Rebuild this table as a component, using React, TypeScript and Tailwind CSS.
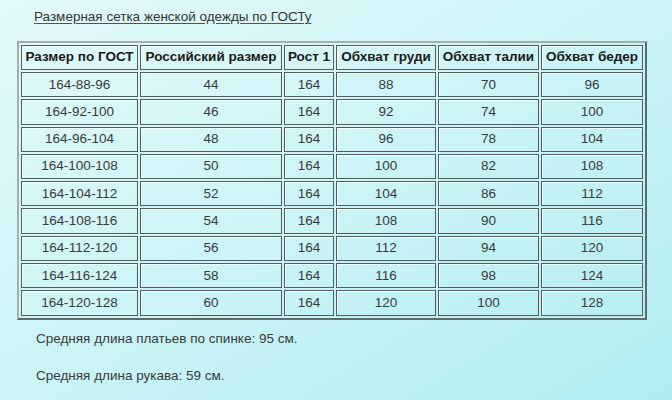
// Women's clothing size chart (GOST) -- old-school bordered HTML table.

const HEAD = ['Размер по ГОСТ', 'Российский размер', 'Рост 1', 'Обхват груди', 'Обхват талии', 'Обхват бедер'];
const WIDTHS = ['w-[117px]', 'w-[142px]', 'w-[50px]', 'w-[100px]', 'w-[101px]', 'w-[102px]'];

const ROWS = [
  ['164-88-96', '44', '164', '88', '70', '96'],
  ['164-92-100', '46', '164', '92', '74', '100'],
  ['164-96-104', '48', '164', '96', '78', '104'],
  ['164-100-108', '50', '164', '100', '82', '108'],
  ['164-104-112', '52', '164', '104', '86', '112'],
  ['164-108-116', '54', '164', '108', '90', '116'],
  ['164-112-120', '56', '164', '112', '94', '120'],
  ['164-116-124', '58', '164', '116', '98', '124'],
  ['164-120-128', '60', '164', '120', '100', '128'],
];

const cell = 'border border-[#4f5d5e] shadow-[inset_1px_1px_0_#f4ffff] text-center p-0';

export default function App() {
  return (
    <div className="w-[672px] h-[400px] overflow-hidden bg-gradient-to-br from-[#e4fafb] via-[#cbf4f6] to-[#b0ecf0] font-['Liberation_Sans',Arial,sans-serif] text-[#3a3a3a]">
      <div className="pt-[4px] pl-[34px] h-[41px]">
        <span className="text-[13.5px] leading-[16px] text-[#333] underline underline-offset-2 decoration-[#555]">
          Размерная сетка женской одежды по ГОСТу
        </span>
      </div>

      <table className="ml-[17px] table-fixed border-separate border-spacing-[2px] border-2 border-t-[#a3b0b1] border-l-[#a3b0b1] border-r-[#5e6a6b] border-b-[#5e6a6b]">
        <thead>
          <tr>
            {HEAD.map((h, i) => (
              <th key={h} className={`${cell} ${WIDTHS[i]} h-[25px] text-[13.5px] font-bold text-[#1a1a1a]`}>
                {h}
              </th>
            ))}
          </tr>
        </thead>
        <tbody>
          {ROWS.map((r) => (
            <tr key={r[0]}>
              {r.map((v, i) => (
                <td key={i} className={`${cell} h-[25.3px] text-[13.5px]`}>
                  {v}
                </td>
              ))}
            </tr>
          ))}
        </tbody>
      </table>

      <p className="pl-[36px] mt-[11px] text-[13.5px] leading-[16px] text-[#3a3a3a]">
        Средняя длина платьев по спинке: 95 см.
      </p>
      <p className="pl-[36px] mt-[21px] text-[13.5px] leading-[16px] text-[#3a3a3a]">
        Средняя длина рукава: 59 см.
      </p>
    </div>
  );
}
